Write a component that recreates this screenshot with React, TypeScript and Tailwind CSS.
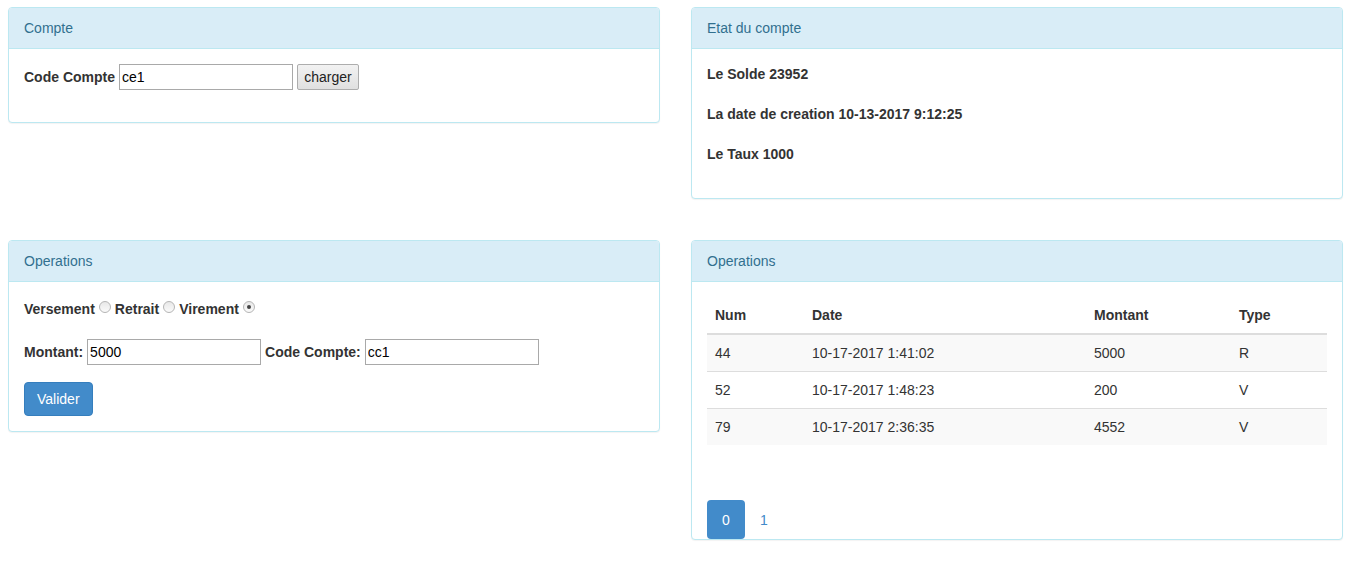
import React from "react";

const font = "font-['Liberation_Sans',Arial,sans-serif]";

function Panel({
  title,
  className = "",
  children,
}: {
  title: string;
  className?: string;
  children: React.ReactNode;
}) {
  return (
    <div
      className={`border border-[#bce8f1] rounded-[4px] bg-white shadow-[0_1px_1px_rgba(0,0,0,0.05)] ${className}`}
    >
      <div className="bg-[#d9edf7] text-[#31708f] border-b border-[#bce8f1] rounded-t-[3px] px-[15px] py-[10px] leading-[20px]">
        {title}
      </div>
      {children}
    </div>
  );
}

function TextInput({ value }: { value: string }) {
  return (
    <input
      readOnly
      value={value}
      className="w-[174px] h-[26px] border border-[#a9a9a9] px-[2px] text-[14px] text-black font-normal outline-none"
    />
  );
}

function Radio({ checked = false }: { checked?: boolean }) {
  return (
    <span className="inline-flex items-center justify-center w-[12px] h-[12px] rounded-full border border-[#b5b5b5] bg-gradient-to-b from-[#e8e8e8] to-[#fafafa] mx-[4px] translate-y-[-2px]">
      {checked && <span className="w-[4px] h-[4px] rounded-full bg-[#444]" />}
    </span>
  );
}

const rows = [
  { num: "44", date: "10-17-2017 1:41:02", montant: "5000", type: "R" },
  { num: "52", date: "10-17-2017 1:48:23", montant: "200", type: "V" },
  { num: "79", date: "10-17-2017 2:36:35", montant: "4552", type: "V" },
];

export default function App() {
  return (
    <div className={`${font} text-[14px] leading-[20px] text-[#333] bg-white min-h-[563px] px-[8px] pt-[7px]`}>
      <div className="grid grid-cols-[652px_652px] gap-x-[31px] gap-y-[41px] items-start">
        {/* Compte */}
        <Panel title="Compte">
          <div className="px-[15px] pt-[15px] pb-[32px] flex items-center">
            <label className="font-bold mr-[4px]">Code Compte</label>
            <TextInput value="ce1" />
            <button className="ml-[4px] h-[26px] w-[62px] text-[14px] text-[#222] border border-[#adadad] rounded-[2px] bg-gradient-to-b from-[#f2f2f2] to-[#e0e0e0]">
              charger
            </button>
          </div>
        </Panel>

        {/* Etat du compte */}
        <Panel title="Etat du compte">
          <div className="px-[15px] pt-[15px] pb-[34px] flex flex-col gap-[20px] font-bold">
            <div>Le Solde 23952</div>
            <div>La date de creation 10-13-2017 9:12:25</div>
            <div>Le Taux 1000</div>
          </div>
        </Panel>

        {/* Operations form */}
        <Panel title="Operations">
          <div className="px-[15px] pt-[17px] pb-[15px] font-bold">
            <div className="flex items-center">
              <span>Versement</span>
              <Radio />
              <span>Retrait</span>
              <Radio />
              <span>Virement</span>
              <Radio checked />
            </div>
            <div className="flex items-center mt-[20px]">
              <label className="mr-[4px]">Montant:</label>
              <TextInput value="5000" />
              <label className="ml-[4px] mr-[4px]">Code Compte:</label>
              <TextInput value="cc1" />
            </div>
            <button className="mt-[17px] h-[34px] px-[12px] rounded-[4px] bg-[#428bca] border border-[#357ebd] text-white font-normal">
              Valider
            </button>
          </div>
        </Panel>

        {/* Operations table */}
        <Panel title="Operations">
          <div className="px-[15px] pt-[15px]">
            <table className="w-full border-collapse">
              <thead>
                <tr className="border-b-2 border-[#ddd] text-left">
                  <th className="w-[97px] px-[8px] py-[8px] font-bold">Num</th>
                  <th className="w-[282px] px-[8px] py-[8px] font-bold">Date</th>
                  <th className="w-[145px] px-[8px] py-[8px] font-bold">Montant</th>
                  <th className="px-[8px] py-[8px] font-bold">Type</th>
                </tr>
              </thead>
              <tbody>
                {rows.map((r, i) => (
                  <tr
                    key={r.num}
                    className={`${i > 0 ? "border-t border-[#ddd]" : ""} ${i % 2 === 0 ? "bg-[#f9f9f9]" : ""}`}
                  >
                    <td className="px-[8px] py-[8px]">{r.num}</td>
                    <td className="px-[8px] py-[8px]">{r.date}</td>
                    <td className="px-[8px] py-[8px]">{r.montant}</td>
                    <td className="px-[8px] py-[8px]">{r.type}</td>
                  </tr>
                ))}
              </tbody>
            </table>
            <ul className="flex mt-[55px]">
              <li className="w-[38px] h-[39px] flex items-center justify-center bg-[#428bca] text-white rounded-[4px]">
                0
              </li>
              <li className="w-[38px] h-[39px] flex items-center justify-center text-[#428bca]">
                1
              </li>
            </ul>
          </div>
        </Panel>
      </div>
    </div>
  );
}
